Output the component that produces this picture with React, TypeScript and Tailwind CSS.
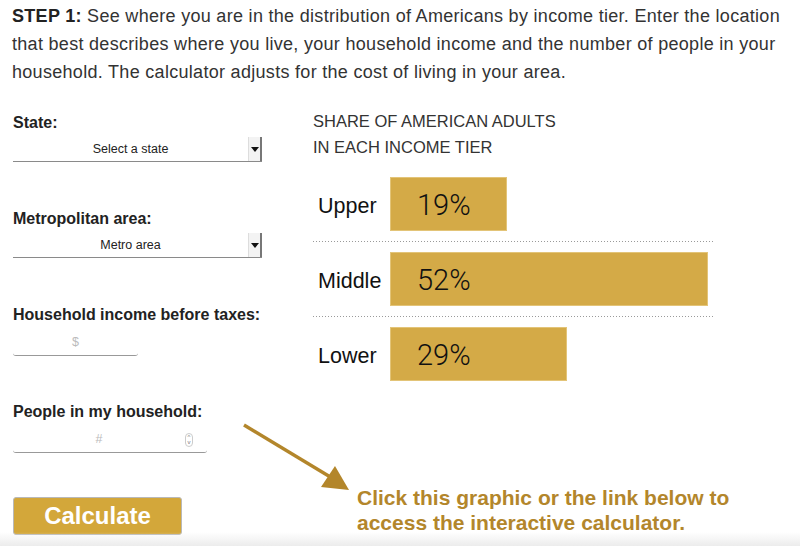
const tiers = [
  { label: "Upper", pct: 19, width: 117 },
  { label: "Middle", pct: 52, width: 318 },
  { label: "Lower", pct: 29, width: 177 },
];

function FakeSelect({ text }: { text: string }) {
  return (
    <div className="mt-[5px] flex h-[25px] w-[249px] items-center border-b border-[#8a8a8a]">
      <span className="flex-1 text-center text-[12.5px] text-[#222]">{text}</span>
      <span className="flex h-full w-[14px] items-center justify-center border-r-2 border-l border-r-[#777] border-l-[#ddd] bg-[#f3f3f3]">
        <svg width="8" height="5" viewBox="0 0 8 5">
          <path d="M0 0h8L4 5z" fill="#111" />
        </svg>
      </span>
    </div>
  );
}

function FakeInput({ width, placeholder, spinner }: { width: string; placeholder: string; spinner?: boolean }) {
  return (
    <div className={`mt-[6px] flex h-[26px] items-center rounded-b-[3px] border-b border-[#999] ${width}`}>
      <span className="flex-1 text-center text-[12.5px] text-[#bbb]">{placeholder}</span>
      {spinner && (
        <span className="mr-[14px] flex h-[14px] w-[8px] flex-col items-center justify-center rounded-full border border-[#ccc] text-[6px] leading-[5px] text-[#777]">
          <span>^</span>
          <span>v</span>
        </span>
      )}
    </div>
  );
}

function Label({ children, className = "" }: { children: React.ReactNode; className?: string }) {
  return <div className={`text-[16px] leading-[18px] font-bold text-[#222] ${className}`}>{children}</div>;
}

export default function App() {
  return (
    <div className="relative h-[546px] w-[800px] overflow-hidden bg-white font-['Liberation_Sans',Arial,sans-serif] text-[#222]">
      <p className="whitespace-nowrap pt-[2px] pl-[12px] text-[18px] leading-[28px] tracking-[0.3px] text-[#333]">
        <b className="text-[#222]">STEP 1:</b> See where you are in the distribution of Americans by income tier. Enter the location
        <br />
        that best describes where you live, your household income and the number of people in your
        <br />
        household. The calculator adjusts for the cost of living in your area.
      </p>

      <div className="mt-[22px] flex">
        <div className="w-[313px] pt-[6px] pl-[13px]">
          <Label>State:</Label>
          <FakeSelect text="Select a state" />
          <Label className="mt-[48px]">Metropolitan area:</Label>
          <FakeSelect text="Metro area" />
          <Label className="mt-[48px]">Household income before taxes:</Label>
          <FakeInput width="w-[125px]" placeholder="$" />
          <Label className="mt-[47px]">People in my household:</Label>
          <FakeInput width="w-[194px]" placeholder="#" spinner />
          <button className="mt-[44px] h-[38px] w-[169px] rounded-[3px] border border-[#b9b9b9] bg-[#d3a73a] text-[24px] font-bold text-white">
            Calculate
          </button>
        </div>

        <div className="w-[420px]">
          <div className="text-[16.5px] leading-[26px] text-[#333] uppercase">
            Share of American adults
            <br />
            in each income tier
          </div>
          <div className="mt-[17px] w-[400px]">
            {tiers.map((t, i) => (
              <div key={t.label}>
                {i > 0 && (
                  <div className="my-[10px] h-px bg-[linear-gradient(to_right,#9a9a9a_1px,transparent_1px)] bg-size-[3px_1px]" />
                )}
                <div className="flex h-[54px] items-center">
                  <div className="w-[77px] pt-[5px] pl-[5px] text-[21.5px] text-[#111]">{t.label}</div>
                  <div
                    className="flex h-full items-center border border-[#e3c478] bg-[#d4aa47] pt-[4px] pl-[26px] font-['Roboto',sans-serif] text-[29px] font-light text-[#111]"
                    style={{ width: t.width }}
                  >
                    {t.pct}%
                  </div>
                </div>
              </div>
            ))}
          </div>
          <div className="mt-[104px] ml-[44px] text-[21px] leading-[25px] font-bold whitespace-nowrap text-[#b3862b]">
            Click this graphic or the link below to
            <br />
            access the interactive calculator.
          </div>
        </div>
      </div>

      <svg className="absolute top-[418px] left-[238px]" width="120" height="78" viewBox="0 0 120 78">
        <line x1="6" y1="7" x2="94" y2="60" stroke="#b3862b" strokeWidth="3.4" />
        <path d="M111 72 L83 69 L97 48 Z" fill="#b3862b" />
      </svg>

      <div className="absolute right-0 bottom-0 left-0 h-[14px] bg-linear-to-b from-transparent to-[#ececec]" />
    </div>
  );
}
